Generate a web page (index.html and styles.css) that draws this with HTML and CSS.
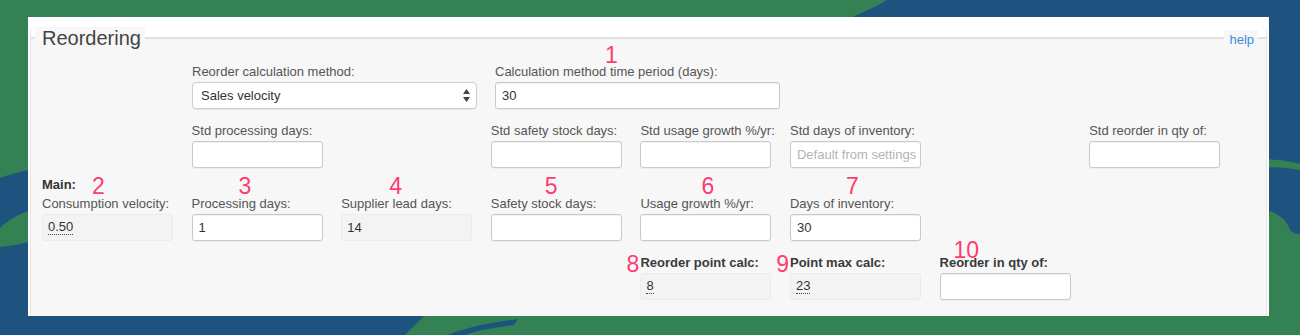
FILE: index.html
```html
<!DOCTYPE html>
<html lang="en">
<head>
<meta charset="utf-8">
<title>Reordering</title>
<link rel="stylesheet" href="styles.css">
</head>
<body>
<svg class="bg" width="1300" height="335" viewBox="0 0 1300 335" aria-hidden="true">
  <rect width="1300" height="335" fill="#1e5380"/>
  <path d="M0 0 H887 C877 6 864 12 853 17 L853 60 L40 60 L28 170 C18 172 8 175 0 178 Z" fill="#348254"/>
  <path d="M40 205 L28 211 C16 215 6 222 0 228 L0 247 C10 246 20 244 28 242 L40 240 Z" fill="#348254"/>
  <path d="M1250 160 C1275 158 1288 161 1300 164 L1300 170 C1288 168 1275 166 1250 168 Z" fill="#348254"/>
  <path d="M1250 208 C1275 209 1286 218 1290 230 C1294 234 1297 234 1300 234 L1300 335 L405 335 L424 316 L1250 300 Z" fill="#348254"/>
  <path d="M448 335 C470 326 495 322 518 319 L514 325 C492 328 474 331 466 335 Z" fill="#1e5380"/>
</svg>

<main class="panel">
  <section class="fs">
    <header class="fs-head">
      <span class="legend">Reordering</span>
      <a class="help" href="#">help</a>
    </header>

    <div class="fs-body">
      <div class="row1">
        <div class="field wide">
          <label class="lbl">Reorder calculation method:</label>
          <div class="select">
            <span>Sales velocity</span>
            <svg width="7" height="13" viewBox="0 0 7 13"><path d="M3.5 0 L7 5 H0 Z M0 8 H7 L3.5 13 Z" fill="#444"/></svg>
          </div>
        </div>
        <div class="field wide">
          <label class="lbl">Calculation method time period (days):<span class="num n1">1</span></label>
          <input class="inp" type="text" value="30">
        </div>
      </div>

      <div class="grid row2">
        <div class="field c2">
          <label class="lbl">Std processing days:</label>
          <input class="inp" type="text" value="">
        </div>
        <div class="field c4">
          <label class="lbl">Std safety stock days:</label>
          <input class="inp" type="text" value="">
        </div>
        <div class="field c5">
          <label class="lbl">Std usage growth %/yr:</label>
          <input class="inp" type="text" value="">
        </div>
        <div class="field c6">
          <label class="lbl">Std days of inventory:</label>
          <input class="inp" type="text" value="" placeholder="Default from settings">
        </div>
        <div class="field c8">
          <label class="lbl">Std reorder in qty of:</label>
          <input class="inp" type="text" value="">
        </div>
      </div>

      <div class="grid hdrow">
        <div class="hd c1"><b class="main">Main:</b><span class="d2">2</span></div>
        <div class="hd c2 d3">3</div>
        <div class="hd c3 d4">4</div>
        <div class="hd c4 d5">5</div>
        <div class="hd c5 d6">6</div>
        <div class="hd c6 d7">7</div>
      </div>

      <div class="grid row3">
        <div class="field c1">
          <label class="lbl">Consumption velocity:</label>
          <div class="ro"><abbr class="dot">0.50</abbr></div>
        </div>
        <div class="field c2">
          <label class="lbl">Processing days:</label>
          <input class="inp" type="text" value="1">
        </div>
        <div class="field c3">
          <label class="lbl">Supplier lead days:</label>
          <div class="ro">14</div>
        </div>
        <div class="field c4">
          <label class="lbl">Safety stock days:</label>
          <input class="inp" type="text" value="">
        </div>
        <div class="field c5">
          <label class="lbl">Usage growth %/yr:</label>
          <input class="inp" type="text" value="">
        </div>
        <div class="field c6">
          <label class="lbl">Days of inventory:</label>
          <input class="inp" type="text" value="30">
        </div>
      </div>

      <div class="grid row4">
        <div class="field c5">
          <label class="lbl strong">Reorder point calc:<span class="num side">8</span></label>
          <div class="ro"><abbr class="dot">8</abbr></div>
        </div>
        <div class="field c6">
          <label class="lbl strong">Point max calc:<span class="num side">9</span></label>
          <div class="ro"><abbr class="dot">23</abbr></div>
        </div>
        <div class="field c7">
          <label class="lbl strong">Reorder in qty of:<span class="num n10">10</span></label>
          <input class="inp" type="text" value="">
        </div>
      </div>
    </div>
  </section>
</main>
</body>
</html>
```

FILE: styles.css
```css
* { box-sizing: border-box; }

html, body {
  margin: 0;
  padding: 0;
}

body {
  width: 1300px;
  height: 335px;
  position: relative;
  overflow: hidden;
  font-family: "Liberation Sans", Arial, Helvetica, sans-serif;
  font-size: 13px;
  color: #555;
  background: #1e5380;
}

.bg {
  position: absolute;
  left: 0;
  top: 0;
  z-index: 0;
  display: block;
}

.panel {
  position: relative;
  z-index: 1;
  margin: 17px 0 0 28px;
  width: 1241px;
  height: 299px;
  background: #fff;
  padding: 10px 2px 0 2px;
  display: flex;
  flex-direction: column;
}

.fs {
  flex: 1;
  display: flex;
  flex-direction: column;
}

.fs-head {
  height: 23px;
  display: flex;
  align-items: center;
  justify-content: space-between;
  background: linear-gradient(to bottom, #fff 0, #fff 10px, #e0e0e0 10px, #e0e0e0 12px, #f7f7f7 12px, #f7f7f7 100%);
  border-left: 1px solid #e6e6e6;
  border-right: 1px solid #e6e6e6;
  border-radius: 5px 5px 0 0;
  border-top: 0;
}

.legend {
  margin-left: 4px;
  padding: 0 4px 0 7px;
  font-size: 20px;
  line-height: 23px;
  height: 23px;
  color: #444;
  background: #f7f7f7;
}

.help {
  margin-right: 8px;
  padding: 2px 4px 0 5px;
  font-size: 13px;
  line-height: 16px;
  color: #3b8bdb;
  text-decoration: none;
  background: #f7f7f7;
}

.fs-body {
  flex: 1;
  background: #f7f7f7;
  border-left: 1px solid #e6e6e6;
  border-right: 1px solid #e6e6e6;
  padding-left: 11px;
}

.row1 {
  display: flex;
  gap: 18px;
  margin: 14px 0 0 150px;
}

.grid {
  display: grid;
  grid-template-columns: repeat(8, 131px);
  column-gap: 18.6px;
}

.row2 { margin-top: 14px; }
.row3 { margin-top: 0; }
.row4 { margin-top: 14px; }

.c1 { grid-column: 1; }
.c2 { grid-column: 2; }
.c3 { grid-column: 3; }
.c4 { grid-column: 4; }
.c5 { grid-column: 5; }
.c6 { grid-column: 6; }
.c7 { grid-column: 7; }
.c8 { grid-column: 8; }

.field {
  display: flex;
  flex-direction: column;
}

.wide { width: 285px; }

.lbl {
  position: relative;
  display: block;
  height: 16px;
  line-height: 16px;
  margin-bottom: 2px;
  white-space: nowrap;
  color: #555;
}

.lbl.strong {
  font-weight: bold;
  color: #3a3a3a;
}

.inp {
  display: block;
  width: 100%;
  height: 27px;
  margin: 0;
  padding: 0 4px 0 6px;
  font: 13px "Liberation Sans", Arial, sans-serif;
  color: #333;
  background: #fff;
  border: 1px solid #c9c9c9;
  border-radius: 3px;
  box-shadow: inset 0 1px 1px rgba(0, 0, 0, 0.06), 0 1px 0 rgba(0, 0, 0, 0.04);
  outline: none;
}

.inp::placeholder {
  color: #b3b3b3;
  opacity: 1;
}

.select {
  height: 27px;
  display: flex;
  align-items: center;
  justify-content: space-between;
  padding: 0 6px 0 8px;
  color: #333;
  background: #fff;
  border: 1px solid #cfcfcf;
  border-radius: 4px;
  box-shadow: 0 1px 1px rgba(0, 0, 0, 0.08);
}

.select svg { display: block; }

.ro {
  height: 27px;
  display: flex;
  align-items: center;
  padding-left: 5px;
  color: #333;
  background: #f3f3f3;
  border: 1px solid #ececec;
  border-radius: 3px;
}

.dot {
  text-decoration: none;
  border-bottom: 1px dotted #444;
  line-height: 14px;
}

.num {
  color: #ff3b6f;
  font-size: 23px;
  line-height: 20px;
  font-weight: normal;
}

.n1 {
  position: absolute;
  left: 110px;
  bottom: 100%;
  margin-bottom: -1px;
}

.n10 {
  position: absolute;
  left: 14px;
  bottom: 100%;
  margin-bottom: -5px;
}

.side {
  position: absolute;
  right: 100%;
  bottom: -3px;
  margin-right: 1px;
}

.hdrow {
  height: 20px;
  margin-top: 8px;
}

.hd {
  font-size: 23px;
  line-height: 20px;
  color: #ff3b6f;
  white-space: nowrap;
}

.main {
  font-size: 13px;
  line-height: 16px;
  color: #333;
  vertical-align: 5px;
}

.d2 { margin-left: 16px; }
.d3 { padding-left: 47px; }
.d4 { padding-left: 48px; }
.d5 { padding-left: 54px; }
.d6 { padding-left: 61px; }
.d7 { padding-left: 56px; }
```
